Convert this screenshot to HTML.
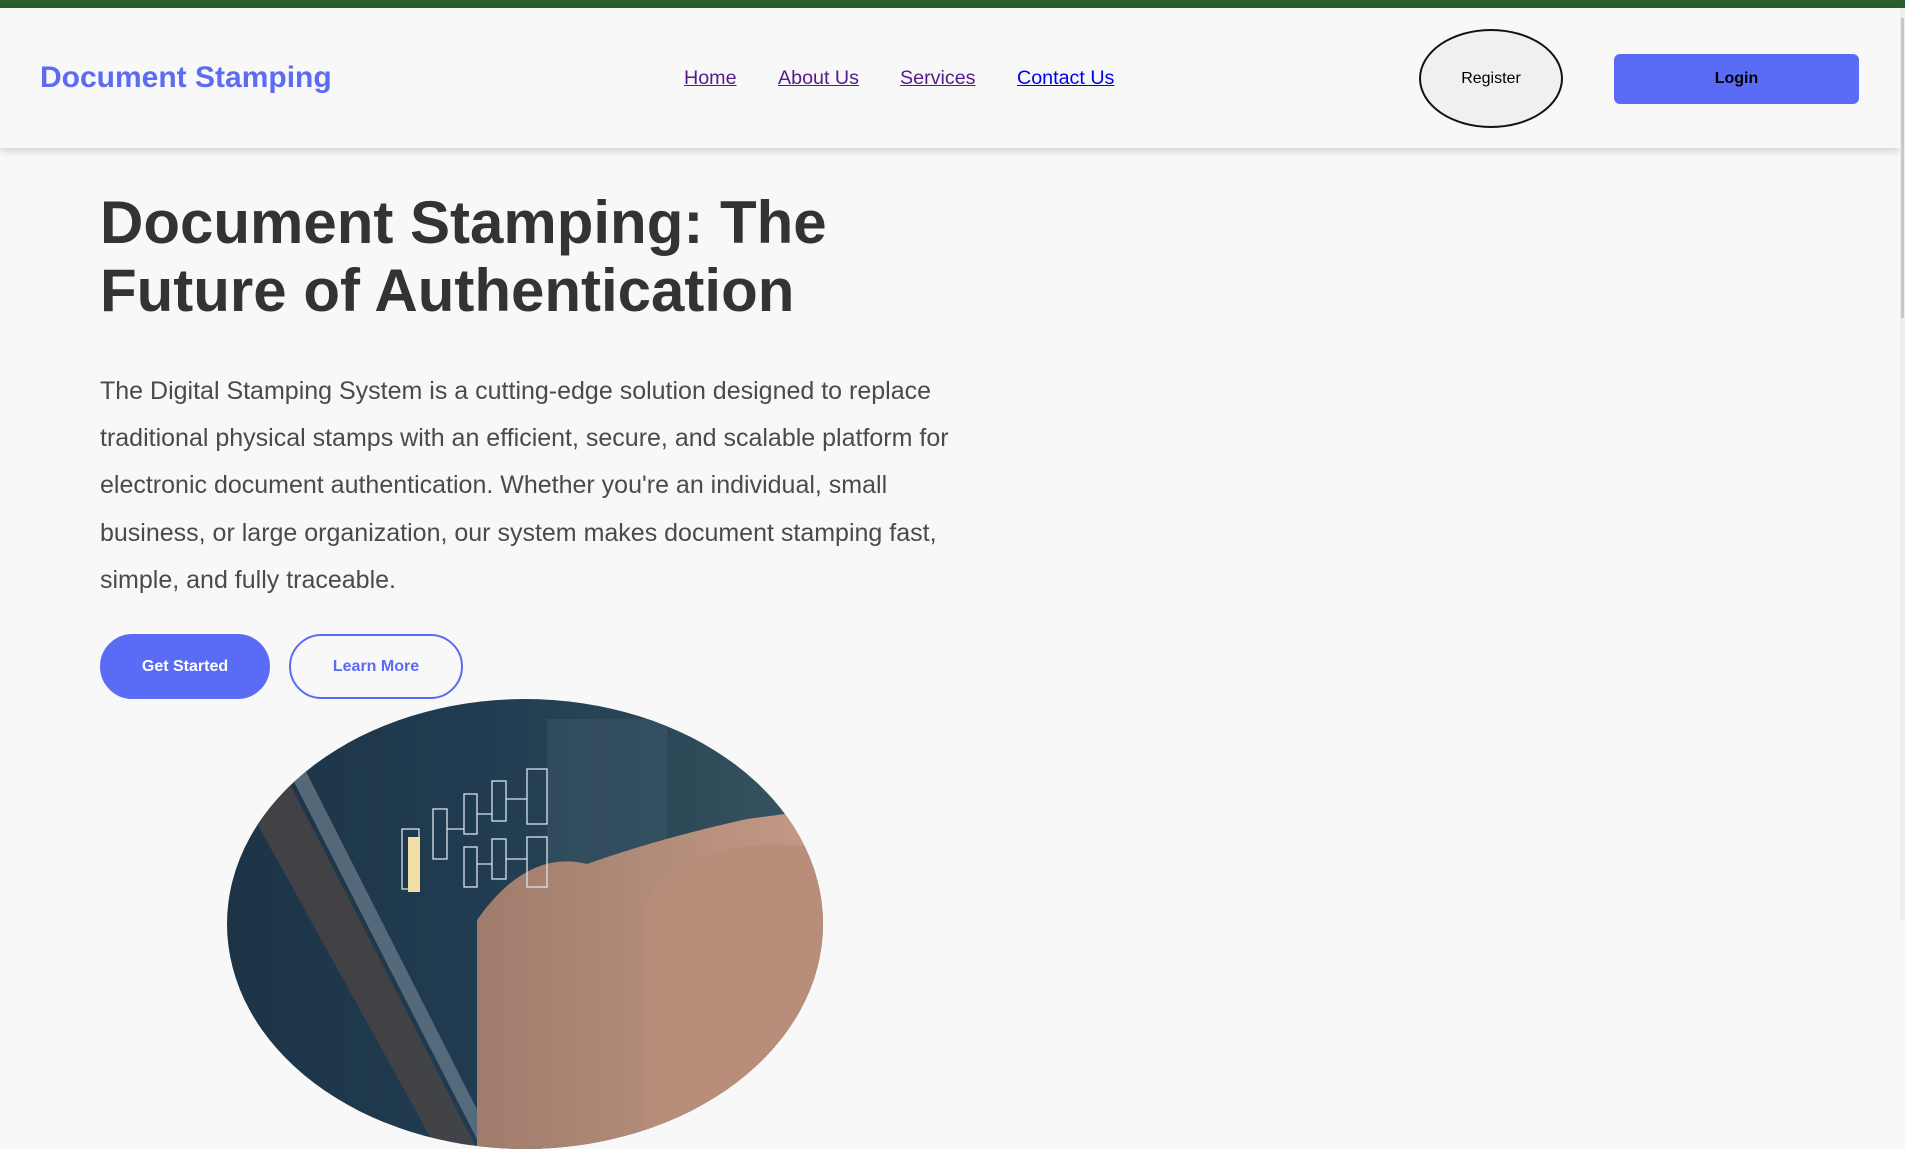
<!DOCTYPE html>
<html><head><meta charset="utf-8"><style>
*{margin:0;padding:0;box-sizing:border-box}
html,body{width:1905px;height:920px;overflow:hidden;background:#f8f8f8;font-family:"Liberation Sans",Arial,sans-serif}
.top{height:8px;background:#2a5e2c}
header{position:absolute;top:8px;left:0;width:1900px;height:140px;background:#f8f8f8;box-shadow:0 3px 8px rgba(0,0,0,.15)}
.logo{position:absolute;left:40px;top:53px;font-size:30px;font-weight:bold;color:#5b6cf2}
nav a{position:absolute;top:59px;font-size:19.7px;color:#551a8b;text-decoration:underline}
.reg{position:absolute;left:1419px;top:21px;width:144px;height:99px;border:2px solid #111;border-radius:50%;background:#f0f0f0;font-size:16px;text-align:center;line-height:95px;color:#000}
.login{position:absolute;left:1614px;top:46px;width:245px;height:50px;border-radius:6px;background:#5a6cf5;font-size:16px;font-weight:bold;text-align:center;line-height:50px;color:#000}
.sb{position:absolute;right:0;top:8px;width:5px;height:912px;background:#eee}
.sb i{position:absolute;left:1px;top:10px;width:3px;height:300px;background:#c8c8c8}
h1{position:absolute;left:100px;top:189px;font-size:60px;line-height:68px;color:#333;font-weight:bold;width:950px}
p{position:absolute;left:100px;top:368px;width:880px;font-size:25px;line-height:47.2px;color:#4a4a4a}
.btn{position:absolute;top:634px;height:65px;border-radius:33px;font-size:16px;font-weight:bold;text-align:center;line-height:61px}
.b1{left:100px;width:170px;background:#5a6cf5;color:#fff;border:2px solid #5a6cf5}
.b2{left:289px;width:174px;border:2px solid #5a6cf5;color:#5a6cf5;background:#f8f8f8}
.img{position:absolute;left:227px;top:699px;width:596px;height:450px;border-radius:50%;overflow:hidden;background:linear-gradient(90deg,#1d3447 0%,#203b50 40%,#2a4656 70%,#3a5562 100%)}
</style></head><body>
<div class="top"></div>
<header>
<div class="logo">Document Stamping</div>
<nav><a style="left:684px">Home</a><a style="left:778px">About Us</a><a style="left:900px">Services</a><a style="left:1017px;color:#0000ee">Contact Us</a></nav>
<div class="reg">Register</div>
<div class="login">Login</div>
</header>
<div class="sb"><i></i></div>
<h1>Document Stamping: The<br>Future of Authentication</h1>
<p>The Digital Stamping System is a cutting-edge solution designed to replace traditional physical stamps with an efficient, secure, and scalable platform for electronic document authentication. Whether you're an individual, small business, or large organization, our system makes document stamping fast, simple, and fully traceable.</p>
<div class="btn b1">Get Started</div>
<div class="btn b2">Learn More</div>
<div class="img"><svg width="596" height="450" viewBox="0 0 596 450">
<defs><linearGradient id="h" x1="0" y1="0" x2="1" y2="0"><stop offset="0" stop-color="#a07c6c"/><stop offset="1" stop-color="#c49a86"/></linearGradient></defs>
<polygon points="0,70 40,40 250,450 210,450" fill="#5a4a42" opacity=".6"/>
<polygon points="45,40 60,35 270,450 255,450" fill="#8a9aa6" opacity=".5"/>
<rect x="320" y="20" width="120" height="160" fill="#3b5566" opacity=".5"/>
<path d="M250 450 L250 221 Q300 150 360 165 Q430 140 520 120 L596 110 L596 450Z" fill="url(#h)"/>
<path d="M420 450 L420 200 Q480 130 596 150 L596 450Z" fill="#b88e7a"/>
<g fill="none" stroke="#d8e4ea" stroke-width="1.3">
<rect x="175" y="130" width="17" height="60"/><rect x="206" y="110" width="14" height="50"/><rect x="237" y="95" width="13" height="40"/><rect x="265" y="82" width="14" height="40"/><rect x="300" y="70" width="20" height="55"/>
<rect x="237" y="148" width="13" height="40"/><rect x="265" y="140" width="14" height="40"/><rect x="300" y="138" width="20" height="50"/>
<path d="M220 130 H237 M250 115 H265 M279 100 H300 M250 165 H265 M279 160 H300"/>
</g>
<rect x="181" y="138" width="12" height="55" fill="#f1dfa5"/>
</svg></div>
</body></html>
